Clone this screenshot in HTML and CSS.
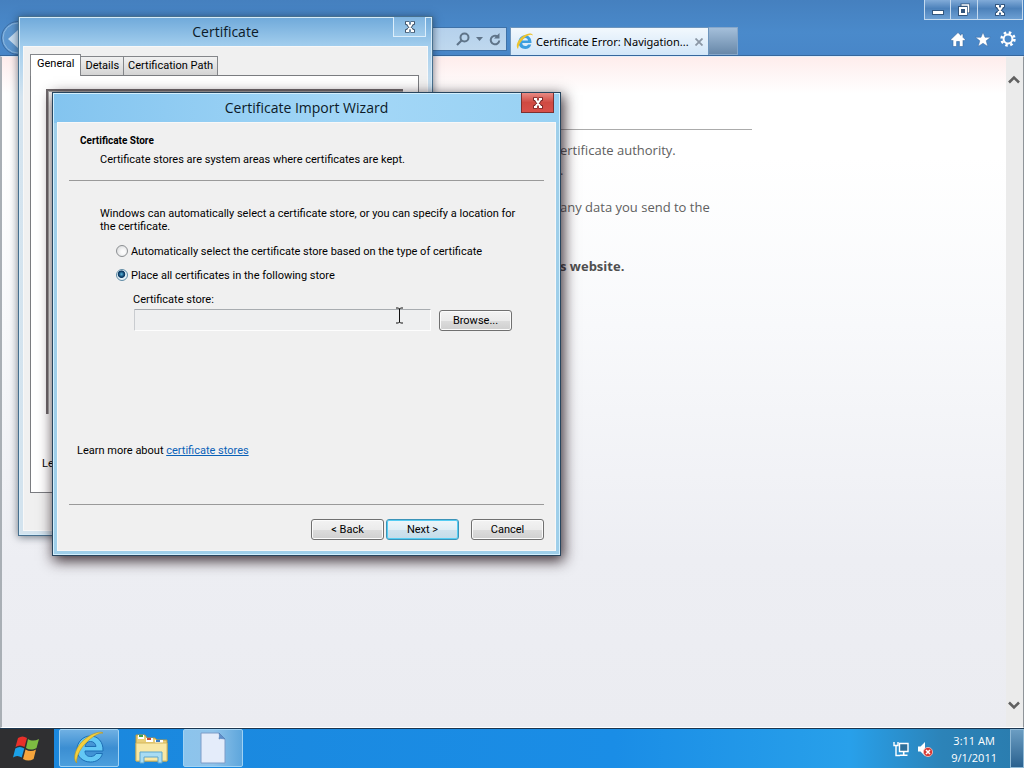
FILE: index.html
```html
<!DOCTYPE html>
<html lang="en">
<head>
<meta charset="utf-8">
<title>Certificate Import Wizard</title>
<link rel="stylesheet" href="styles.css">
</head>
<body>
<div class="desktop">
  <div class="browser">
    <header class="chrome">
      <div class="window-controls">
        <button class="wc" aria-label="Minimize"><svg width="14" height="12" viewBox="0 0 14 12"><rect x="1.500" y="6.500" width="11" height="4" fill="#fff" stroke="#33567e"/></svg></button>
        <button class="wc" aria-label="Restore"><svg width="14" height="14" viewBox="0 0 14 14"><path d="M3.500.5h9.500v9.500h-2.500v3H1V3h2.500z" fill="#33567e"/><path d="M4.500 2h7v7.500" fill="none" stroke="#fff" stroke-width="1.500"/><path d="M3 5h6v6H3z" fill="none" stroke="#fff" stroke-width="2"/></svg></button>
        <button class="wc wc-close" aria-label="Close"><svg width="14" height="12" viewBox="0 0 14 12"><path d="M2 1.500h4.500M7.500 1.500H12M2 10.500h4.500M7.500 10.500H12M4 2l6 8M10 2l-6 8" stroke="#33567e" stroke-width="4"/><path d="M3 2h3M8 2h3M3 10h3M8 10h3M4.500 2l5 8M9.500 2l-5 8" stroke="#fff" stroke-width="2"/></svg></button>
      </div>
      <div class="nav-row">
        <button class="back" aria-label="Back"><svg width="34" height="36" viewBox="0 0 34 36"><circle cx="18" cy="18" r="16.500" fill="#5c96cf" stroke="#3d6da3"/><circle cx="18" cy="18" r="15" fill="none" stroke="#8fb9e0"/><path d="M8 19l10-9v6h9v6h-9v6z" fill="#c5dcf1"/></svg></button>
        <div class="address">
          <button class="tool" aria-label="Search"><svg width="14" height="14" viewBox="0 0 14 14"><circle cx="8.500" cy="5.500" r="4" fill="none" stroke="#5f7489" stroke-width="2"/><path d="M5.500 8.500L1 13" stroke="#5f7489" stroke-width="2.200"/></svg></button>
          <button class="tool" aria-label="Search options"><svg width="7" height="4" viewBox="0 0 7 4"><path d="M0 0h7L3.500 4z" fill="#5f7489"/></svg></button>
          <button class="tool" aria-label="Refresh"><svg width="12" height="13" viewBox="0 0 12 13"><path d="M8.500 3.500A4.300 4.300 0 1 0 10.300 7.500" fill="none" stroke="#5f7489" stroke-width="2"/><path d="M10.500 0v5.500H5z" fill="#5f7489"/></svg></button>
        </div>
        <div class="tab">
          <svg width="17" height="17" viewBox="0 0 34 34"><path d="M31 20H12.500c0 4 2.500 6 6 6 2.600 0 4.500-1 5.500-3h6.500c-1.600 6-6.600 9-12 9C11 32 5 26.500 5 18.500S11 4.500 18.500 4.500 31.500 11 31 20zM12.500 15H24c-.3-3-2.500-5-5.700-5s-5.300 2-5.800 5z" fill="#3d9fe0"/><path d="M4 32C-2 26 4 13 14 6 23 0 32-1 34 5c-4-3-10-1-16 4C10 16 5 24 4 32z" fill="#ecc32e"/></svg>
          <span class="tab-title">Certificate Error: Navigation...</span>
          <button class="tab-close" aria-label="Close tab"><svg width="8" height="8" viewBox="0 0 8 8"><path d="M.5.5l7 7M7.500.5l-7 7" stroke="#8b97a5" stroke-width="1.800"/></svg></button>
        </div>
        <button class="new-tab" aria-label="New tab"></button>
        <div class="commands">
          <button class="tool" aria-label="Home"><svg width="16" height="15" viewBox="0 0 16 15"><path d="M8 .5L.8 7.500l1.400 1.400.8-.7V14.500h3.600V9.500h2.800v5H13V8.200l.8.7 1.400-1.400L13 5.300V2h-2v1.400z" fill="#fff" stroke="#3868a0" stroke-width=".6"/></svg></button>
          <button class="tool" aria-label="Favorites"><svg width="16" height="15" viewBox="0 0 16 15"><path d="M8 .3l2 5h5.600l-4.400 3.500 1.600 5.700L8 11.300l-4.800 3.200 1.600-5.700L.4 5.300H6z" fill="#fff" stroke="#3868a0" stroke-width=".5"/></svg></button>
          <button class="tool" aria-label="Tools"><svg width="16" height="16" viewBox="0 0 16 16"><circle cx="8" cy="8" r="6.400" fill="none" stroke="#fff" stroke-width="2.600" stroke-dasharray="2.500 2.526"/><circle cx="8" cy="8" r="4.400" fill="none" stroke="#fff" stroke-width="2"/></svg></button>
        </div>
      </div>
    </header>
    <main class="page">
      <div class="page-body">
        <hr class="page-rule">
        <p class="page-text">ertificate authority.</p>
        <p class="page-text">.</p>
        <p class="page-text data-line">any data you send to the</p>
        <p class="page-text warn">s website.</p>
      </div>
      <div class="scrollbar">
        <button class="scroll-btn" aria-label="Scroll up"><svg width="12" height="9" viewBox="0 0 12 9"><path d="M1 7.500L6 2.500l5 5" fill="none" stroke="#606060" stroke-width="2.600"/></svg></button>
        <button class="scroll-btn" aria-label="Scroll down"><svg width="12" height="9" viewBox="0 0 12 9"><path d="M1 1.500l5 5 5-5" fill="none" stroke="#606060" stroke-width="2.600"/></svg></button>
      </div>
    </main>
  </div>

  <section class="window cert-window" aria-label="Certificate">
    <div class="titlebar">
      <h1 class="title">Certificate</h1>
      <button class="close" aria-label="Close"><svg width="14" height="12" viewBox="0 0 14 12"><path d="M2 2h4.500M7.500 2H12M2 10h4.500M7.500 10H12M4 2l6 8M10 2l-6 8" stroke="#44566b" stroke-width="3.600"/><path d="M3 2h3M8 2h3M3 10h3M8 10h3M4.500 2l5 8M9.500 2l-5 8" stroke="#fff" stroke-width="1.800"/></svg></button>
    </div>
    <div class="client cert-client">
      <div class="tabs" role="tablist">
        <button class="dlg-tab active" role="tab" aria-selected="true">General</button>
        <button class="dlg-tab" role="tab" aria-selected="false">Details</button>
        <button class="dlg-tab" role="tab" aria-selected="false">Certification Path</button>
      </div>
      <div class="panel">
        <div class="cert-info"></div>
        <p class="cert-learn">Le</p>
      </div>
    </div>
  </section>

  <section class="window wizard" aria-label="Certificate Import Wizard">
    <div class="titlebar">
      <h1 class="title">Certificate Import Wizard</h1>
      <button class="close close-red" aria-label="Close"><svg width="14" height="12" viewBox="0 0 14 12"><path d="M2 2h4.500M7.500 2H12M2 10h4.500M7.500 10H12M4 2l6 8M10 2l-6 8" stroke="#7a2a2a" stroke-width="3.600"/><path d="M3 2h3M8 2h3M3 10h3M8 10h3M4.500 2l5 8M9.500 2l-5 8" stroke="#fff" stroke-width="2"/></svg></button>
    </div>
    <form class="client wizard-client">
      <div class="wizard-head">
        <h2 class="head">Certificate Store</h2>
        <p class="subhead">Certificate stores are system areas where certificates are kept.</p>
      </div>
      <div class="wizard-body">
        <p class="intro">Windows can automatically select a certificate store, or you can specify a location for the certificate.</p>
        <label class="option"><input class="radio" type="radio" name="store"><span>Automatically select the certificate store based on the type of certificate</span></label>
        <label class="option"><input class="radio" type="radio" name="store" checked><span>Place all certificates in the following store</span></label>
        <label class="store-label" for="store-name">Certificate store:</label>
        <div class="store-row">
          <input class="store-input" id="store-name" type="text" readonly>
          <button class="btn" type="button">Browse...</button>
        </div>
        <p class="learn">Learn more about <a class="link" href="#stores">certificate stores</a></p>
      </div>
      <div class="wizard-foot">
        <button class="btn" type="button">&lt; Back</button>
        <button class="btn btn-default" type="button">Next &gt;</button>
        <button class="btn btn-cancel" type="button">Cancel</button>
      </div>
    </form>
  </section>

  <svg class="cursor" width="9" height="17" viewBox="0 0 9 17"><path d="M1 1h2.500l1 1 1-1H8M4.500 2v13M1 16h2.500l1-1 1 1H8" fill="none" stroke="#111"/></svg>

  <footer class="taskbar">
    <button class="start" aria-label="Start"><svg width="28" height="26" viewBox="0 0 28 26"><path d="M5 2c3-2 6-2 9 0l-2.500 9c-3-2-6-2-9 0z" fill="#e8302a"/><path d="M15 3c3 2 7 2 11 0l-2.500 9c-4 2-7 2-10.500 0z" fill="#7dbb42"/><path d="M2.300 12.500c3-2 6-2 9 0L8.700 21.500c-3-2-6-2-8.700 0z" fill="#1ba1e8"/><path d="M12.500 13.500c3.500 2 7 2 10.500 0L20.600 23c-3.500 2-7 2-10.600 0z" fill="#f6a53c"/></svg></button>
    <button class="task active-task" aria-label="Internet Explorer"><svg width="34" height="34" viewBox="0 0 34 34"><path d="M31 20H13c0 4 2.500 5.500 5.500 5.500 2.600 0 4.500-1 5.500-3h6.500c-1.600 6-6.600 8.500-12 8.500C11 31 5 26 5 18.500S11 5 18.500 5 31.500 11 31 20zM13 15.500h11c-.3-3-2.500-5-5.500-5s-5 2-5.500 5z" fill="#63c8f5" stroke="#1d6fb5"/><path d="M4.500 32C0 27 4 15 13 8 21 1.500 29 0 31 2c-5 0-9 3-14 7C9 16 4.500 24 4.500 32z" fill="#f3cf3e" stroke="#b99420" stroke-width=".6"/></svg></button>
    <button class="task" aria-label="File Explorer"><svg width="34" height="32" viewBox="0 0 34 32"><path d="M2 3h9l2 3h8l2 2h10v21H2z" fill="#e9cf79" stroke="#b89a45"/><path d="M4 3h6v4H4z" fill="#fff"/><path d="M5 3h4v2H5z" fill="#3ca24a"/><path d="M12 6h7v4h-7z" fill="#fff"/><path d="M13 6h4v2h-4z" fill="#c94835"/><path d="M21 8h8v4h-8z" fill="#fff"/><path d="M22 8h4v2h-4z" fill="#3b7dc0"/><path d="M2 11h31v18H2z" fill="#f8e8a6" stroke="#d4b75f"/><path d="M6 31V20h22v11h-4v-6H10v6z" fill="#a8dcf3" stroke="#5fa6cc"/></svg></button>
    <button class="task active-task doc-task" aria-label="Certificate"><svg width="26" height="32" viewBox="0 0 26 32"><path d="M1 1h18l6 6v24H1z" fill="#e4ecfa" stroke="#7d9cc8"/><path d="M19 1c1 3 0 5 0 6 2-1 4 0 6 0z" fill="#5f8fca" stroke="#4e7bb5" stroke-width=".6"/></svg></button>
    <div class="tray">
      <svg width="16" height="16" viewBox="0 0 16 16"><path d="M1 1v3.500h4V1M3 4v10.500h4" fill="none" stroke="#fff" stroke-width="1.400"/><path d="M6.500 2.500h8.500v8H6.500z" fill="#2d6f9a" stroke="#fff" stroke-width="1.400"/><path d="M7 14.300h7.500M10.700 11v3" stroke="#fff" stroke-width="1.600"/></svg>
      <svg width="16" height="16" viewBox="0 0 16 16"><path d="M1 5.500h2.500L8 1v14l-4.500-4.500H1z" fill="#fff"/><circle cx="11" cy="11" r="4.600" fill="#d83a34" stroke="#f3c5c2" stroke-width=".8"/><path d="M9 9l4 4M13 9l-4 4" stroke="#fff" stroke-width="1.500"/></svg>
      <div class="clock"><span>3:11 AM</span><span>9/1/2011</span></div>
      <button class="show-desktop" aria-label="Show desktop"></button>
    </div>
  </footer>
</div>
</body>
</html>
```
FILE: styles.css
```css
* { box-sizing: border-box; }
body, h1, h2, p, hr { margin: 0; }
button { font: inherit; color: inherit; padding: 0; border: 0; background: none; }
svg { display: block; flex: none; }
p { white-space: nowrap; }

.desktop {
  position: relative;
  display: flex;
  flex-direction: column;
  height: 100vh;
  overflow: hidden;
  font: 11px/13px Roboto, "Noto Sans", sans-serif;
  color: #000;
}

/* Browser */
.browser { flex: 1; min-height: 0; display: flex; flex-direction: column; }
.chrome {
  background: linear-gradient(#4580bf, #4a8acb 60%, #4886c8);
  border-bottom: 1px solid #36679d;
}
.window-controls { display: flex; justify-content: flex-end; height: 20px; padding-right: 1px; }
.wc {
  width: 27px;
  display: grid;
  place-items: center;
  border: 1px solid #c4daef;
  border-top: 0;
  border-left-width: 0;
  background: linear-gradient(#81abd8, #4c81ba 45%, #6c9fd3);
}
.wc:first-child { border-left-width: 1px; }
.wc-close { width: 45px; }
.nav-row { display: flex; align-items: flex-end; height: 35px; }
.back { width: 34px; height: 35px; overflow: hidden; }
.address {
  flex: 0 1 473px;
  height: 24px;
  margin-bottom: 4px;
  padding-right: 5px;
  display: flex;
  align-items: center;
  justify-content: flex-end;
  gap: 6px;
  background: linear-gradient(#b5d1ec, #bfd8ee);
  border: 1px solid #3f72a8;
}
.tab {
  width: 199px;
  height: 28px;
  margin-left: 3px;
  padding: 0 5px;
  display: flex;
  align-items: center;
  gap: 3px;
  background: linear-gradient(#f2f8fd, #d2e6f8);
  border: 1px solid #6d95bd;
  border-bottom: 0;
  font-family: "Noto Sans", "Open Sans", sans-serif;
  white-space: nowrap;
}
.tab-title { flex: 1; }
.new-tab {
  width: 29px;
  height: 28px;
  background: linear-gradient(#a4bfda, #6888a9);
  border: 1px solid #86a7ca;
  border-left: 0;
}
.commands { margin-left: auto; padding: 0 8px 8px 0; display: flex; align-items: center; gap: 9px; }

.page {
  flex: 1;
  min-height: 0;
  display: flex;
  border-top: 1px solid #e6eef8;
  border-left: 2px solid #a9afb5;
  border-right: 1px solid #8f9499;
  border-bottom: 1px solid #fff;
  background:
    linear-gradient(#feedec, rgba(255, 250, 248, 0) 36px),
    linear-gradient(#fff 15%, #f8f9fb 40%, #edeef3 75%, #ebecf1);
}
.page-body {
  flex: 1;
  padding: 72px 0 0 558px;
  font: 13px/18px "Open Sans", "Noto Sans", sans-serif;
  color: #606060;
}
.page-rule { width: 192px; border: 0; border-top: 1px solid #ababab; }
.page-text { padding-top: 2px; }
.page-rule + .page-text { padding-top: 11px; }
.data-line { padding-top: 19px; }
.warn { padding-top: 41px; font-weight: bold; color: #4f4f4f; }
.scrollbar {
  width: 17px;
  padding: 18px 3px 17px 0;
  display: flex;
  flex-direction: column;
  justify-content: space-between;
  align-items: flex-end;
  background: #ebebeb;
}

/* Dialog windows, free-floating over the desktop */
.window {
  position: absolute;
  padding: 0 4px 4px;
  border: 1px solid #27455e;
  display: flex;
  flex-direction: column;
}
.cert-window {
  left: 18px;
  top: 16px;
  width: 415px;
  height: 520px;
  border-color: #47708f;
  background: linear-gradient(#6fa9da, #a4cfee 30px, #d5e4ef 80px, #d3e3ee);
  box-shadow: inset 0 0 0 1px #d5ebf8, 0 1px 8px rgba(20, 35, 50, .6);
}
.wizard {
  left: 52px;
  top: 92px;
  width: 509px;
  background: linear-gradient(90deg, #83c4ef, #a3d7f7 60%, #98d1f3) 0 0 / 100% 30px no-repeat, #9fcfea;
  box-shadow: inset 0 0 0 1px #d3effd, 2px 4px 13px 1px rgba(30, 15, 22, .85);
}
.titlebar { height: 29px; display: grid; grid-template-columns: 1fr auto 1fr; align-items: start; }
.title {
  grid-column: 2;
  font: 14px/29px "Open Sans", "Noto Sans", sans-serif;
  color: #0c1a28;
}
.close {
  justify-self: end;
  width: 33px;
  height: 20px;
  margin-right: 2px;
  display: grid;
  place-items: center;
  border: 1px solid #dceefb;
  border-top: 0;
  background: linear-gradient(#7fb4e0, #a3cdec);
}
.close-red {
  border-color: #7d3030;
  background: linear-gradient(#e98b84, #cf4a42 50%, #d8504a);
}
.client { flex: 1; background: #f0f0f0; border: 1px solid #f8f8f8; }

.cert-client { padding: 7px 8px 37px 6px; display: flex; flex-direction: column; }
.tabs { display: flex; align-items: flex-end; height: 21px; }
.dlg-tab {
  height: 19px;
  padding: 0 4px;
  border: 1px solid #84868a;
  border-left-width: 0;
  border-bottom: 0;
  background: linear-gradient(#f1f1f1, #d4d4d4);
  line-height: 18px;
}
.dlg-tab.active { position: relative; height: 22px; margin-bottom: -1px; padding: 0 6px 3px; border-left-width: 1px; background: #fff; }
.panel { flex: 1; padding: 13px 15px; background: #fff; border: 1px solid #7a7c80; }
.cert-info { height: 325px; border: 2px solid #6f696c; border-right: 0; border-bottom: 0; box-shadow: inset 1px 1px 0 #aaa; }
.cert-learn { padding: 43px 0 0; margin-left: -4px; }

.wizard-client { padding: 0 11px 10px; }
.wizard-head { padding: 11px 0 14px 11px; border-bottom: 1px solid #9a9a9a; }
.head { font-size: 10px; line-height: 13px; }
.subhead { padding: 6px 0 0 20px; }
.wizard-body { padding: 26px 22px 47px 31px; border-bottom: 1px solid #9a9a9a; }
.intro { padding-bottom: 6px; white-space: normal; }
.option { display: flex; align-items: center; gap: 3px; width: max-content; height: 24px; padding-left: 16px; }
.radio {
  appearance: none;
  width: 12px;
  height: 12px;
  margin: 0;
  border: 1px solid #8c8f92;
  border-radius: 50%;
  background: radial-gradient(circle at 60% 60%, #fbfbfb 20%, #d2d4d6);
}
.radio:checked {
  border-color: #5f8ba5;
  background: radial-gradient(circle at 45% 42%, #58b5dd 0, #0d3c66 35%, #0d3c66 42%, #e4eff5 52%);
}
.store-label { display: block; padding: 6px 0 3px 33px; }
.store-row { display: flex; gap: 8px; padding-left: 34px; align-items: flex-end; }
.store-input {
  width: 297px;
  height: 22px;
  border: 1px solid #fdfdfd;
  border-top-color: #a8acb0;
  border-left-color: #c9ccd0;
  border-radius: 1px;
  background: #eeeff0;
}
.btn {
  width: 73px;
  height: 21px;
  border: 1px solid #707070;
  border-radius: 3px;
  background: linear-gradient(#f3f3f3, #ebebeb 50%, #dcdcdc 51%, #cfcfcf);
  box-shadow: inset 0 0 0 1px #fbfbfb;
}
.btn-default {
  border-color: #3b93b8;
  background: linear-gradient(#eef6fa, #dfeef5 50%, #cfe3ee 51%, #c3dce9);
  box-shadow: inset 0 0 0 1px #55cdf3;
}
.learn { padding-top: 113px; margin-left: -23px; }
.link { color: #0b62b8; }
.wizard-foot { display: flex; justify-content: flex-end; gap: 2px; padding-top: 14px; }
.btn-cancel { margin-left: 10px; }

.cursor { position: absolute; left: 395px; top: 307px; }

/* Taskbar */
.taskbar {
  height: 40px;
  display: flex;
  border-top: 1px solid #1c3650;
  background: linear-gradient(90deg, #1b87dc, #1a8de6 60%, #28a0ea 83%, #2c83b8 92%, #2a7cae);
}
.start { width: 54px; display: grid; place-items: center; background: #2f2f31; }
.task { width: 60px; height: 38px; margin: 0 1px; display: grid; place-items: center; }
.active-task {
  border: 1px solid #9fd2f4;
  border-radius: 2px;
  margin-left: 5px;
  background: linear-gradient(#6fb0e3, #3b8ed2 50%, #4c9fdd);
}
.doc-task { margin-left: 1px; background: linear-gradient(90deg, #8cc4ec, #8fc3ea 50%, #5ea6dc); }
.tray { margin-left: auto; display: flex; align-items: center; gap: 8px; color: #fff; }
.clock {
  display: flex;
  flex-direction: column;
  align-items: center;
  margin: 0 5px 0 10px;
  font: 11px/17px "Open Sans", "Noto Sans", sans-serif;
}
.show-desktop {
  align-self: stretch;
  width: 14px;
  border: 1px solid #8fb9d6;
  background: linear-gradient(#6b9dc2, #2a618f);
}
```
